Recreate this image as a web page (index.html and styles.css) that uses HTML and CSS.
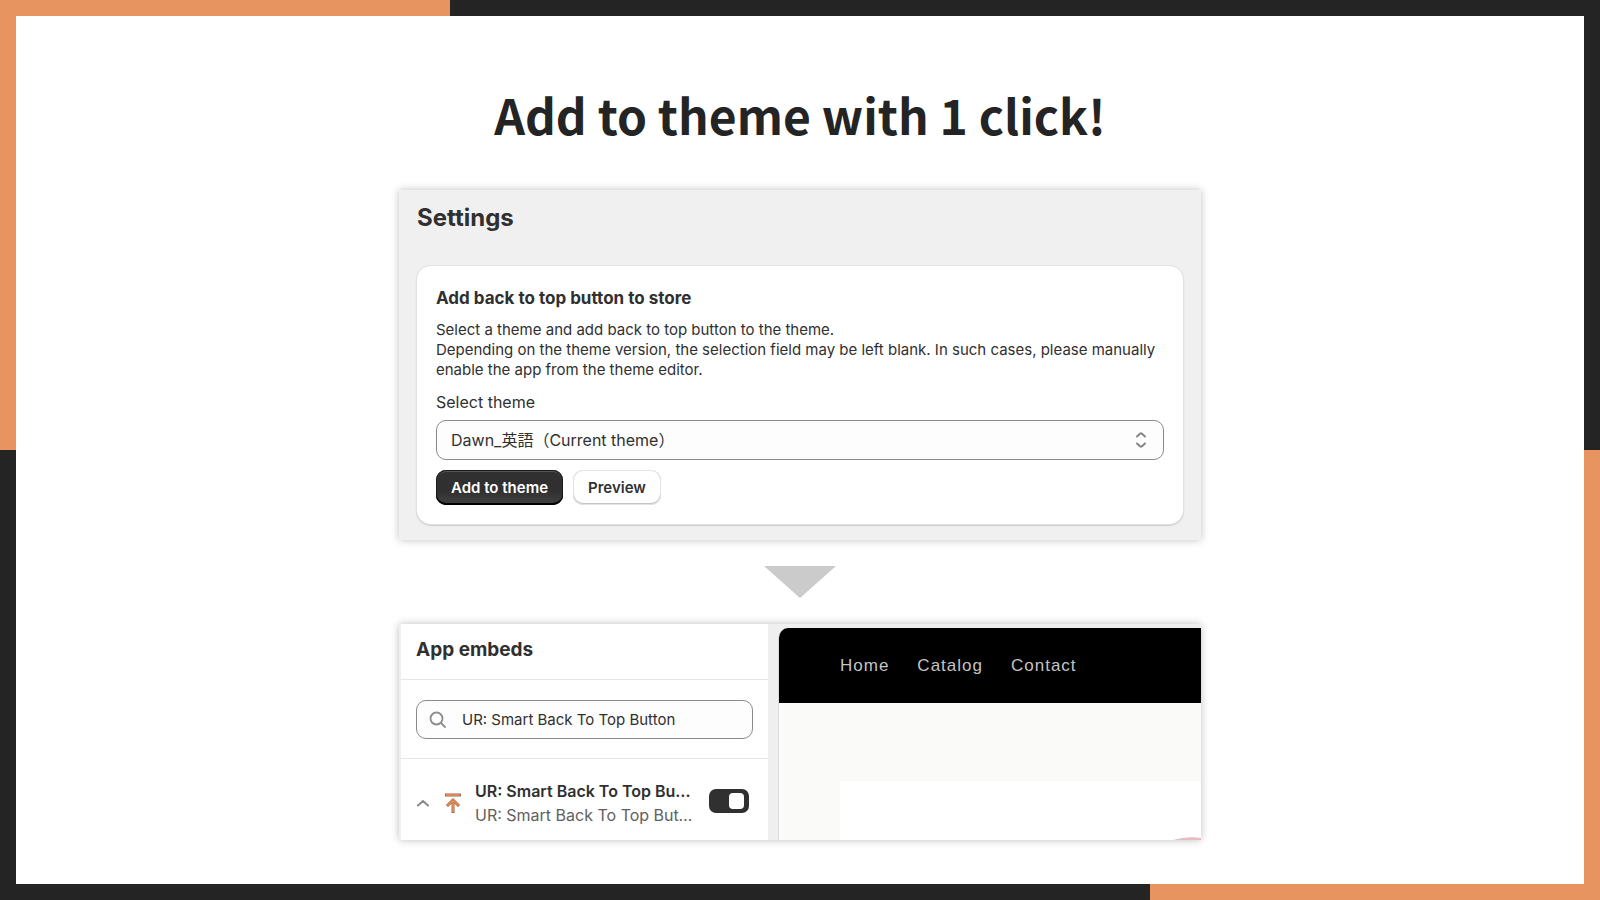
FILE: index.html
```html
<!DOCTYPE html>
<html lang="en">
<head>
    <meta charset="utf-8">
    <title>Add to theme with 1 click!</title>
    <link rel="stylesheet" href="styles.css">
</head>
<body>
    <main class="slide">
        <h1 class="slide-title">Add to theme with 1 click!</h1>

        <section class="panel settings">
            <h2 class="settings-title">Settings</h2>
            <form class="card">
                <h3>Add back to top button to store</h3>
                <p>Select a theme and add back to top button to the theme.<br>
                Depending on the theme version, the selection field may be left blank. In such cases, please manually enable the app from the theme editor.</p>
                <label for="theme">Select theme</label>
                <div class="select-wrap">
                    <select id="theme" name="theme">
                        <option>Dawn_英語（Current theme）</option>
                    </select>
                    <svg class="select-icon" width="12" height="18" viewBox="0 0 12 18" fill="none" stroke="#858585" stroke-width="2" stroke-linecap="round" stroke-linejoin="round">
                        <path d="M2 5.5L5 2.800Q6 2 7 2.800L10 5.5M2 12.5L5 15.200Q6 16 7 15.200L10 12.5"/>
                    </svg>
                </div>
                <div class="actions">
                    <button type="button" class="btn primary">Add to theme</button>
                    <button type="button" class="btn">Preview</button>
                </div>
            </form>
        </section>

        <svg class="arrow" width="72" height="32" viewBox="0 0 72 32">
            <path d="M0 0h72L36 32z" fill="#cbcbcb"/>
        </svg>

        <section class="panel editor">
            <div class="sidebar">
                <h2>App embeds</h2>
                <div class="search">
                    <label class="search-box">
                        <svg width="18" height="18" viewBox="0 0 18 18" fill="none" stroke="#8c8c8c" stroke-width="1.8" stroke-linecap="round">
                            <circle cx="7.5" cy="7.5" r="6"/>
                            <path d="M12 12l4 4"/>
                        </svg>
                        <input type="text" aria-label="Search app embeds" value="UR: Smart Back To Top Button">
                    </label>
                </div>
                <div class="embed">
                    <svg class="chevron" width="12" height="8" viewBox="0 0 12 8" fill="none" stroke="#8a8a8a" stroke-width="2" stroke-linecap="round" stroke-linejoin="round">
                        <path d="M1 6.5L6 2l5 4.5"/>
                    </svg>
                    <svg class="app-icon" width="16" height="20" viewBox="0 0 16 20" fill="none">
                        <path d="M0 2h16M8 20V8M2 13l6-6 6 6" stroke="#8b6b58" stroke-width="3"/>
                        <path d="M1 2h14M8 19V8M2 13l6-6 6 6" stroke="#e08850" stroke-width="2"/>
                    </svg>
                    <div class="embed-text">
                        <strong>UR: Smart Back To Top Button</strong>
                        <span>UR: Smart Back To Top Button</span>
                    </div>
                    <input type="checkbox" class="toggle" aria-label="Enable app embed" checked>
                </div>
            </div>
            <div class="preview">
                <nav>
                    <a href="#">Home</a>
                    <a href="#">Catalog</a>
                    <a href="#">Contact</a>
                </nav>
                <div class="store">
                    <div class="banner">
                        <svg width="28" height="3" viewBox="0 0 28 3">
                            <path d="M0 3Q14-1 28 1V3z" fill="#e6bcc4"/>
                        </svg>
                    </div>
                </div>
            </div>
        </section>
    </main>
</body>
</html>
```
FILE: styles.css
```css
* { box-sizing: border-box; margin: 0; padding: 0; }

/* frame: orange corners on dark */
body {
    min-height: 100vh;
    padding: 16px;
    display: flex;
    font-family: Inter, "Noto Sans CJK JP", sans-serif;
    color: #303030;
    background:
        linear-gradient(#e79460, #e79460) left top / 450px 50% no-repeat,
        linear-gradient(#e79460, #e79460) right bottom / 450px 50% no-repeat,
        #242424;
}
.slide { flex: 1; display: flex; flex-direction: column; align-items: center; padding: 58px 16px 40px; background: #fff; }
.slide-title { font: bold 48px/80px "Noto Sans CJK JP", sans-serif; color: #242424; margin-bottom: 36px; }

.panel { width: 100%; max-width: 802px; box-shadow: 0 0 8px rgba(0,0,0,0.25); }

.settings { padding: 12px 18px 16px; background: #f0f0f0; }
.settings-title { font-size: 24px; line-height: 32px; font-weight: 700; margin-bottom: 32px; }
.card { padding: 20px 19px 19px; background: #fff; border-radius: 14px; box-shadow: 0 0 0 1px #e2e2e2, 0 1px 1px 1px #ccc; }
.card h3 { font-size: 17px; line-height: 24px; font-weight: 700; margin-bottom: 10px; }
.card p { font-size: 15px; line-height: 20px; margin-bottom: 11px; }
.card label { display: block; font-size: 16px; line-height: 22px; margin-bottom: 7px; }
.select-wrap { position: relative; margin-bottom: 10px; }
.select-wrap select { display: block; appearance: none; width: 100%; height: 40px; padding: 0 14px; border: 1px solid #8a8a8a; border-radius: 10px; background: #fdfdfd; font: 16px Inter, "Noto Sans CJK JP", sans-serif; color: #303030; }
.select-icon { position: absolute; right: 17px; top: 11px; pointer-events: none; }
.actions { display: flex; gap: 10px; }
.btn { height: 35px; padding: 0 15px; border: none; border-radius: 10px; font: 600 15px Inter, sans-serif; color: #303030; background: #fff; box-shadow: inset 0 0 0 1px #e3e3e3, inset 0 -1px 0 1px #c4c4c4; cursor: pointer; }
.primary { color: #fff; background: linear-gradient(#303030 60%, #424242); box-shadow: inset 0 -2px 0 #000, inset 0 0 0 1px #1a1a1a, inset 0 2px 0 #555; }

.arrow { display: block; margin: 26px 0; }

.editor { display: flex; height: 216px; background: #efefef; overflow: hidden; }
.sidebar { width: 369px; flex: none; background: #fff; border-left: 2px solid #efefef; }
.sidebar h2 { font-size: 19px; line-height: 24px; font-weight: 700; padding: 14px 15px 17px; border-bottom: 1px solid #e6e6e6; }
.search { padding: 20px 15px 19px; border-bottom: 1px solid #e6e6e6; }
.search-box { display: flex; align-items: center; gap: 15px; height: 39px; padding: 0 12px; border: 1px solid #8a8a8a; border-radius: 10px; background: #fdfdfd; }
.search-box input { flex: 1; min-width: 0; border: none; outline: none; background: none; font: 15px Inter, sans-serif; color: #303030; }
.embed { display: flex; align-items: center; padding: 20px 19px 0 16px; }
.app-icon { margin: 0 14px 0 16px; }
.embed-text { flex: 1; min-width: 0; margin-right: 14px; }
.embed-text strong, .embed-text span { display: block; font-size: 16px; line-height: 24px; overflow: hidden; white-space: nowrap; text-overflow: ellipsis; }
.embed-text strong { font-weight: 600; }
.embed-text span { color: #616161; }
.toggle { appearance: none; flex: none; display: flex; justify-content: flex-end; width: 40px; height: 24px; margin-bottom: 4px; padding: 4px 5px; border-radius: 7px; background: #303030; cursor: pointer; }
.toggle::before { content: ""; width: 15px; border-radius: 4px; background: #fff; }

.preview { flex: 1; display: flex; flex-direction: column; margin: 4px 0 0 10px; border-radius: 10px 0 0 0; background: #fafaf8; border-left: 1px solid #dcdcdc; overflow: hidden; }
.preview nav { display: flex; align-items: center; gap: 28px; height: 75px; padding-left: 61px; background: #000; }
.preview nav a { font: 17px "Liberation Sans", Arial, sans-serif; letter-spacing: 1px; color: #c4c4c4; text-decoration: none; }
.store { flex: 1; display: flex; padding: 78px 0 0 61px; }
.banner { flex: 1; display: flex; align-items: flex-end; justify-content: flex-end; background: #fff; }
```
